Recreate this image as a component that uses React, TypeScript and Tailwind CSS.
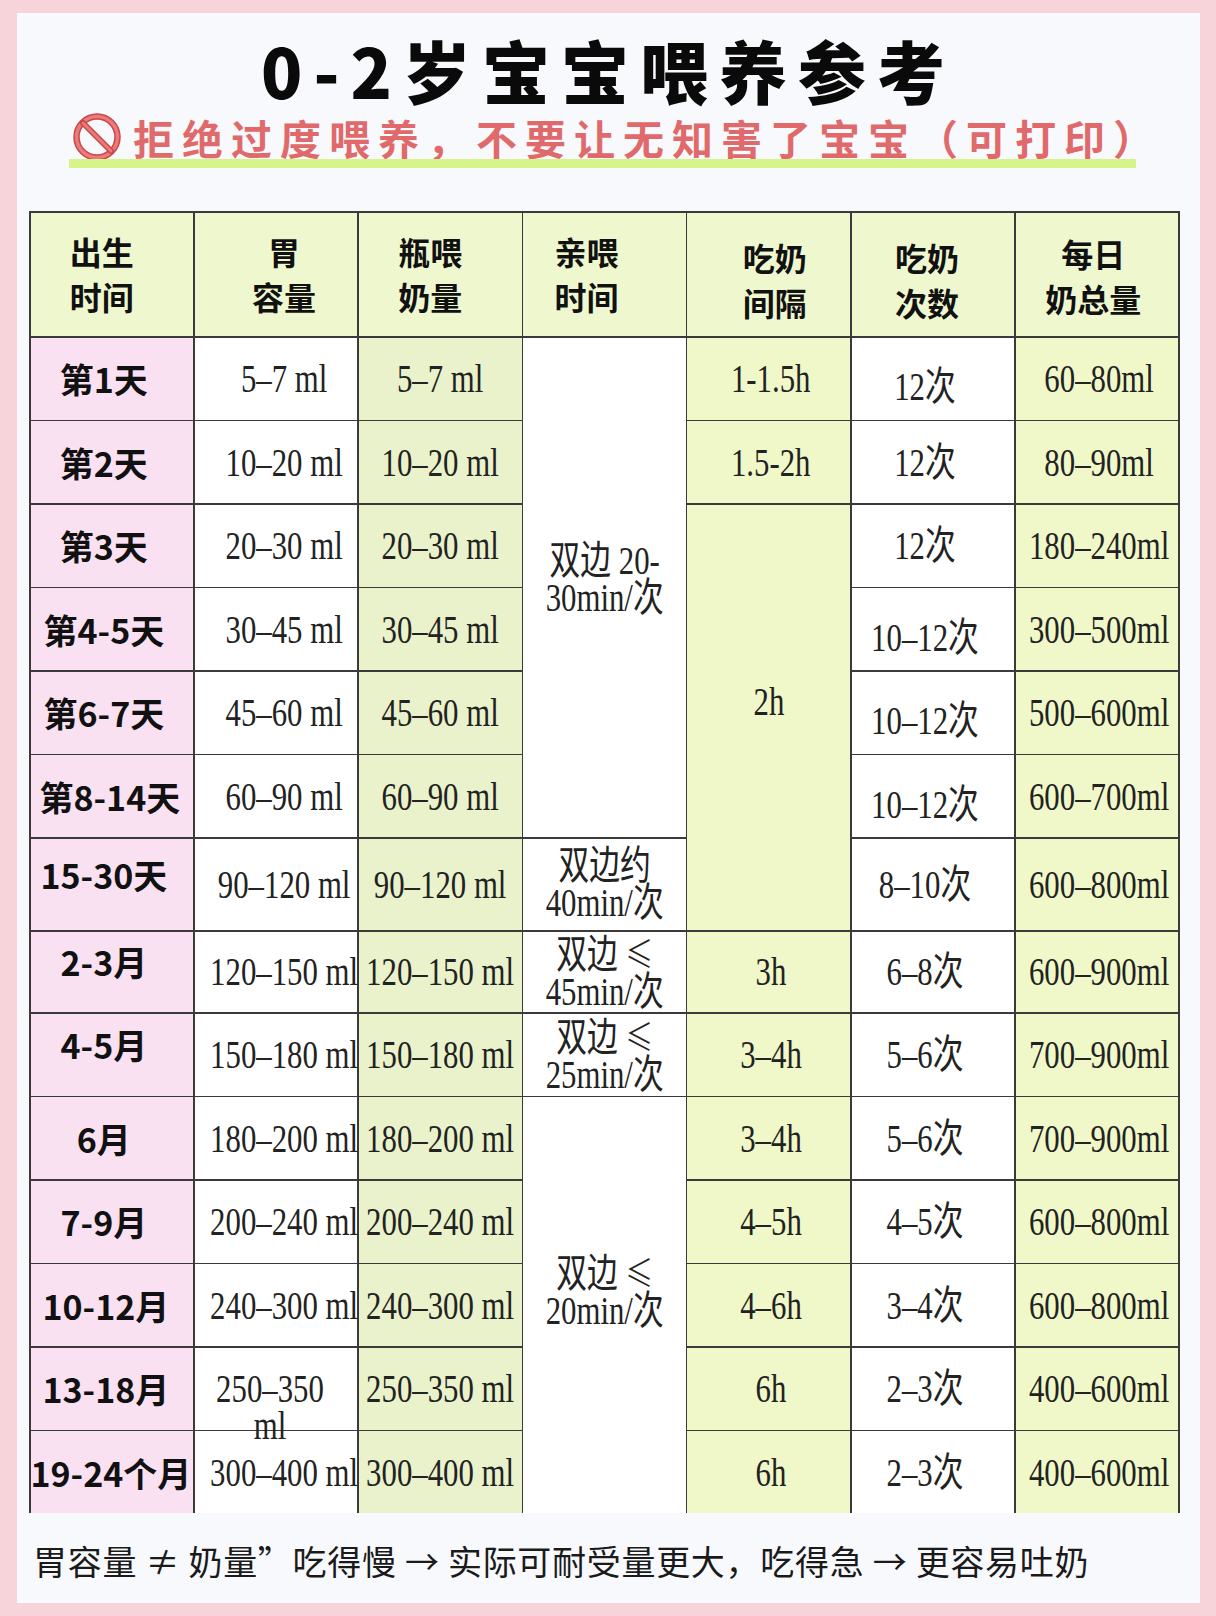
import React from "react";

const PINK = "bg-[#f9e1f1]";
const WHITE = "bg-white";
const G3 = "bg-[#e9f2cb]";
const G5 = "bg-[#f0f8c9]";

function H({ a, b, className = "" }: { a: string; b: string; className?: string }) {
  return (
    <div
      className={`flex flex-col items-center justify-center bg-[#eff7cf] font-['Noto_Sans_CJK_SC',sans-serif] text-[32px] font-bold leading-[45px] text-[#111] ${className}`}
    >
      <span>{a}</span>
      <span>{b}</span>
    </div>
  );
}

function L({ children, className = "" }: { children: React.ReactNode; className?: string }) {
  return (
    <div
      className={`flex items-center justify-center whitespace-nowrap ${PINK} font-['Noto_Sans_CJK_SC',sans-serif] text-[34px] font-bold text-[#111] ${className}`}
    >
      {children}
    </div>
  );
}

function D({
  children,
  bg,
  className = "",
}: {
  children: React.ReactNode;
  bg: string;
  className?: string;
}) {
  return (
    <div className={`flex items-center justify-center text-center ${bg} ${className}`}>
      <span className="inline-block scale-x-[0.77] whitespace-nowrap font-['Liberation_Serif','Noto_Sans_CJK_SC',serif] text-[40px] leading-[37px] text-[#222]">
        {children}
      </span>
    </div>
  );
}

const Le = () => (
  <span className="font-['Noto_Sans_CJK_SC',sans-serif] text-[36px] font-light">≤</span>
);

type Row = {
  label: string;
  labelCls?: string;
  stomach: React.ReactNode;
  bottle: string;
  breast?: React.ReactNode;
  breastSpan?: string;
  gap?: string;
  gapSpan?: string;
  times: string;
  timesDown?: boolean;
  total: string;
};

const rows: Row[] = [
  { label: "第1天", labelCls: "pr-4", stomach: "5–7 ml", bottle: "5–7 ml", breast: <>双边 20-<br />30min/次</>, breastSpan: "row-span-6 pb-4", gap: "1-1.5h", times: "12次", timesDown: true, total: "60–80ml" },
  { label: "第2天", labelCls: "pr-4", stomach: "10–20 ml", bottle: "10–20 ml", gap: "1.5-2h", times: "12次", total: "80–90ml" },
  { label: "第3天", labelCls: "pr-4", stomach: "20–30 ml", bottle: "20–30 ml", gap: "2h", gapSpan: "row-span-5 pb-8", times: "12次", total: "180–240ml" },
  { label: "第4-5天", labelCls: "pr-4", stomach: "30–45 ml", bottle: "30–45 ml", times: "10–12次", timesDown: true, total: "300–500ml" },
  { label: "第6-7天", labelCls: "pr-4", stomach: "45–60 ml", bottle: "45–60 ml", times: "10–12次", timesDown: true, total: "500–600ml" },
  { label: "第8-14天", labelCls: "pr-1", stomach: "60–90 ml", bottle: "60–90 ml", times: "10–12次", timesDown: true, total: "600–700ml" },
  { label: "15-30天", labelCls: "pr-4 pb-5", stomach: "90–120 ml", bottle: "90–120 ml", breast: <>双边约<br />40min/次</>, times: "8–10次", total: "600–800ml" },
  { label: "2-3月", labelCls: "pr-4 pb-5", stomach: "120–150 ml", bottle: "120–150 ml", breast: <>双边 <Le /><br />45min/次</>, gap: "3h", times: "6–8次", total: "600–900ml" },
  { label: "4-5月", labelCls: "pr-4 pb-5", stomach: "150–180 ml", bottle: "150–180 ml", breast: <>双边 <Le /><br />25min/次</>, gap: "3–4h", times: "5–6次", total: "700–900ml" },
  { label: "6月", labelCls: "pr-4", stomach: "180–200 ml", bottle: "180–200 ml", breast: <>双边 <Le /><br />20min/次</>, breastSpan: "row-span-5 pb-7", gap: "3–4h", times: "5–6次", total: "700–900ml" },
  { label: "7-9月", labelCls: "pr-4", stomach: "200–240 ml", bottle: "200–240 ml", gap: "4–5h", times: "4–5次", total: "600–800ml" },
  { label: "10-12月", labelCls: "pr-3", stomach: "240–300 ml", bottle: "240–300 ml", gap: "4–6h", times: "3–4次", total: "600–800ml" },
  { label: "13-18月", labelCls: "pr-3", stomach: "wrap", bottle: "250–350 ml", gap: "6h", times: "2–3次", total: "400–600ml" },
  { label: "19-24个月", labelCls: "justify-start", stomach: "300–400 ml", bottle: "300–400 ml", gap: "6h", times: "2–3次", total: "400–600ml" },
];

function NoIcon() {
  return (
    <svg width="48" height="48" viewBox="0 0 48 48" className="shrink-0">
      <circle cx="24" cy="24" r="20.5" fill="none" stroke="#c9474a" strokeWidth="6.5" />
      <circle cx="24" cy="24" r="20.5" fill="none" stroke="#ea7b78" strokeWidth="3.5" />
      <line x1="10" y1="10" x2="38" y2="38" stroke="#c9474a" strokeWidth="6" strokeLinecap="round" />
      <line x1="10" y1="10" x2="38" y2="38" stroke="#ea7b78" strokeWidth="3" strokeLinecap="round" />
    </svg>
  );
}

export default function App() {
  return (
    <div className="min-h-[1616px] w-[1216px] bg-[#f7d4d9] pb-[13px] pl-[17px] pr-[16px] pt-[13px]">
      <div className="flex h-[1590px] w-[1183px] flex-col bg-[#f8f9fc] pt-[23px]">
        <h1 className="h-[68px] text-center font-['Noto_Sans_CJK_SC',sans-serif] text-[68px] font-black leading-[68px] tracking-[11px] text-[#0a0a0a]">
          0-2岁宝宝喂养参考
        </h1>
        <div className="ml-[56px] mt-[9px] flex h-[48px] items-center gap-[12px]">
          <NoIcon />
          <span className="font-['Noto_Sans_CJK_SC',sans-serif] text-[41px] font-bold leading-[48px] tracking-[8px] text-[#e06a6b]">
            拒绝过度喂养，不要让无知害了宝宝（可打印）
          </span>
        </div>
        <div className="ml-[52px] -mt-[2px] h-[9px] w-[1067px] bg-[#d6f38c]" />

        <div className="ml-[12px] mt-[43px] grid w-[1151px] grid-cols-7 grid-rows-[123.5px_repeat(6,82px)_91.5px_80.5px_repeat(6,82px)] gap-[1.5px] bg-[#3a3a3a] px-[1.5px] pt-[1.5px]">
          <H a="出生" b="时间" className="pr-5" />
          <H a="胃" b="容量" className="pl-4" />
          <H a="瓶喂" b="奶量" className="bg-[#e9f1cd] pr-5" />
          <H a="亲喂" b="时间" className="pr-9" />
          <H a="吃奶" b="间隔" className="pl-3 pt-3" />
          <H a="吃奶" b="次数" className="pr-3 pt-3" />
          <H a="每日" b="奶总量" className="pr-2 pt-1" />

          {rows.map((r) => (
            <React.Fragment key={r.label}>
              <L className={r.labelCls ?? ""}>{r.label}</L>
              {r.stomach === "wrap" ? (
                <D bg={WHITE} className="relative z-10 pr-3">
                  <span className="inline-block translate-y-[18px]">
                    250–350
                    <br />
                    ml
                  </span>
                </D>
              ) : (
                <D bg={WHITE} className="pl-4">
                  {r.stomach}
                </D>
              )}
              <D bg={G3}>{r.bottle}</D>
              {r.breast && (
                <D bg={WHITE} className={r.breastSpan ?? ""}>
                  {r.breast}
                </D>
              )}
              {r.gap && (
                <D bg={G5} className={r.gapSpan ?? "pl-1"}>
                  {r.gap}
                </D>
              )}
              <D bg={WHITE} className={r.timesDown ? "pr-4 pt-4" : "pr-4"}>
                {r.times}
              </D>
              <D bg={G5} className="pl-1">
                {r.total}
              </D>
            </React.Fragment>
          ))}
        </div>

        <p className="ml-[16px] mt-[28px] font-['Noto_Sans_CJK_SC',sans-serif] text-[34px] leading-[40px] tracking-[0.7px] text-[#1a1a1a]">
          胃容量 ≠ 奶量”吃得慢 → 实际可耐受量更大，吃得急 → 更容易吐奶
        </p>
      </div>
    </div>
  );
}
